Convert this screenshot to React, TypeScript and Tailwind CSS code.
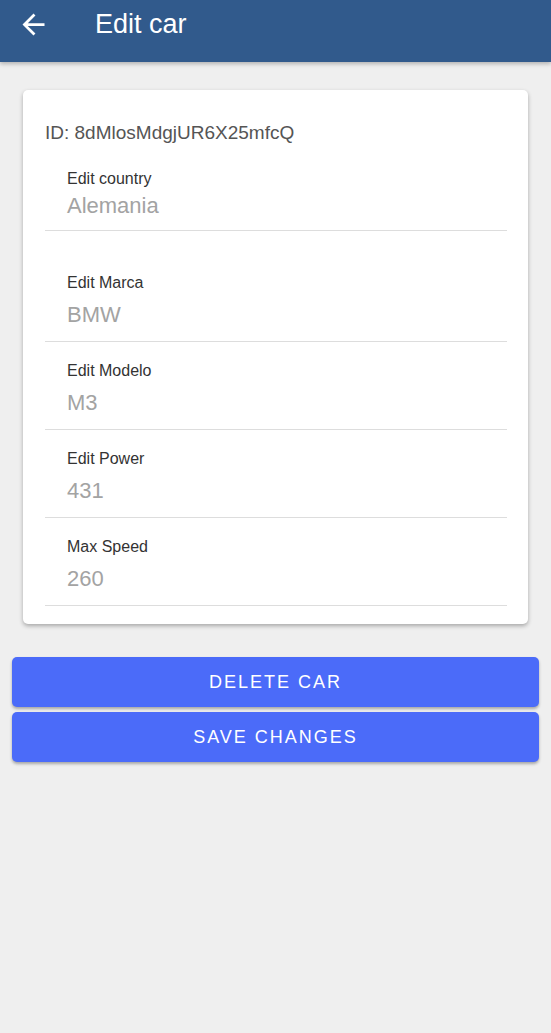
import React from "react";

const fields = [
  { label: "Edit Marca", value: "BMW", pad: "pt-[42px]" },
  { label: "Edit Modelo", value: "M3", pad: "pt-[19px]" },
  { label: "Edit Power", value: "431", pad: "pt-[19px]" },
  { label: "Max Speed", value: "260", pad: "pt-[19px]" },
];

const App = () => {
  return (
    <div className="min-h-[1033px] bg-[#efefef] font-['Liberation_Sans',Arial,sans-serif]">
      <header className="h-[62px] bg-[#315a8c] flex items-start shadow-[0_2px_4px_rgba(0,0,0,0.25)] relative z-10">
        <button className="ml-[17px] mt-[8px] w-[33px] h-[33px] flex items-center justify-center text-white">
          <svg width="33" height="33" viewBox="0 0 24 24" fill="currentColor">
            <path d="M20 11H7.83l5.59-5.59L12 4l-8 8 8 8 1.41-1.41L7.83 13H20v-2z" />
          </svg>
        </button>
        <h1 className="ml-[45px] mt-[8px] text-white text-[27px] leading-[32px]">Edit car</h1>
      </header>

      <div className="mx-[23px] mt-[28px] bg-white rounded-[5px] shadow-[0_2px_4px_rgba(0,0,0,0.3)] pl-[22px] pr-[21px] pt-[31px] pb-[18px]">
        <p className="text-[#555555] text-[19px] leading-[24px]">ID: 8dMlosMdgjUR6X25mfcQ</p>

        <div className="pt-[24px] pb-[10px] pl-[22px] border-b border-[#dddddd]">
          <div className="text-[#333333] text-[16px] leading-[20px]">Edit country</div>
          <div className="mt-[3px] text-[#a3a3a3] text-[22px] leading-[28px]">Alemania</div>
        </div>

        {fields.map((item, index) => (
          <div key={index} className={`${item.pad} pb-[12px] pl-[22px] border-b border-[#dddddd]`}>
            <div className="text-[#333333] text-[16px] leading-[20px]">{item.label}</div>
            <div className="mt-[8px] text-[#a3a3a3] text-[22px] leading-[28px]">{item.value}</div>
          </div>
        ))}
      </div>

      <div className="mx-[12px] mt-[33px] flex flex-col gap-[5px]">
        <button className="h-[50px] rounded-[5px] bg-[#4b6bf9] text-white text-[18px] tracking-[2px] uppercase shadow-[0_2px_3px_rgba(0,0,0,0.3)]">
          Delete car
        </button>
        <button className="h-[50px] rounded-[5px] bg-[#4b6bf9] text-white text-[18px] tracking-[2px] uppercase shadow-[0_2px_3px_rgba(0,0,0,0.3)]">
          Save changes
        </button>
      </div>
    </div>
  );
};

export default App;
